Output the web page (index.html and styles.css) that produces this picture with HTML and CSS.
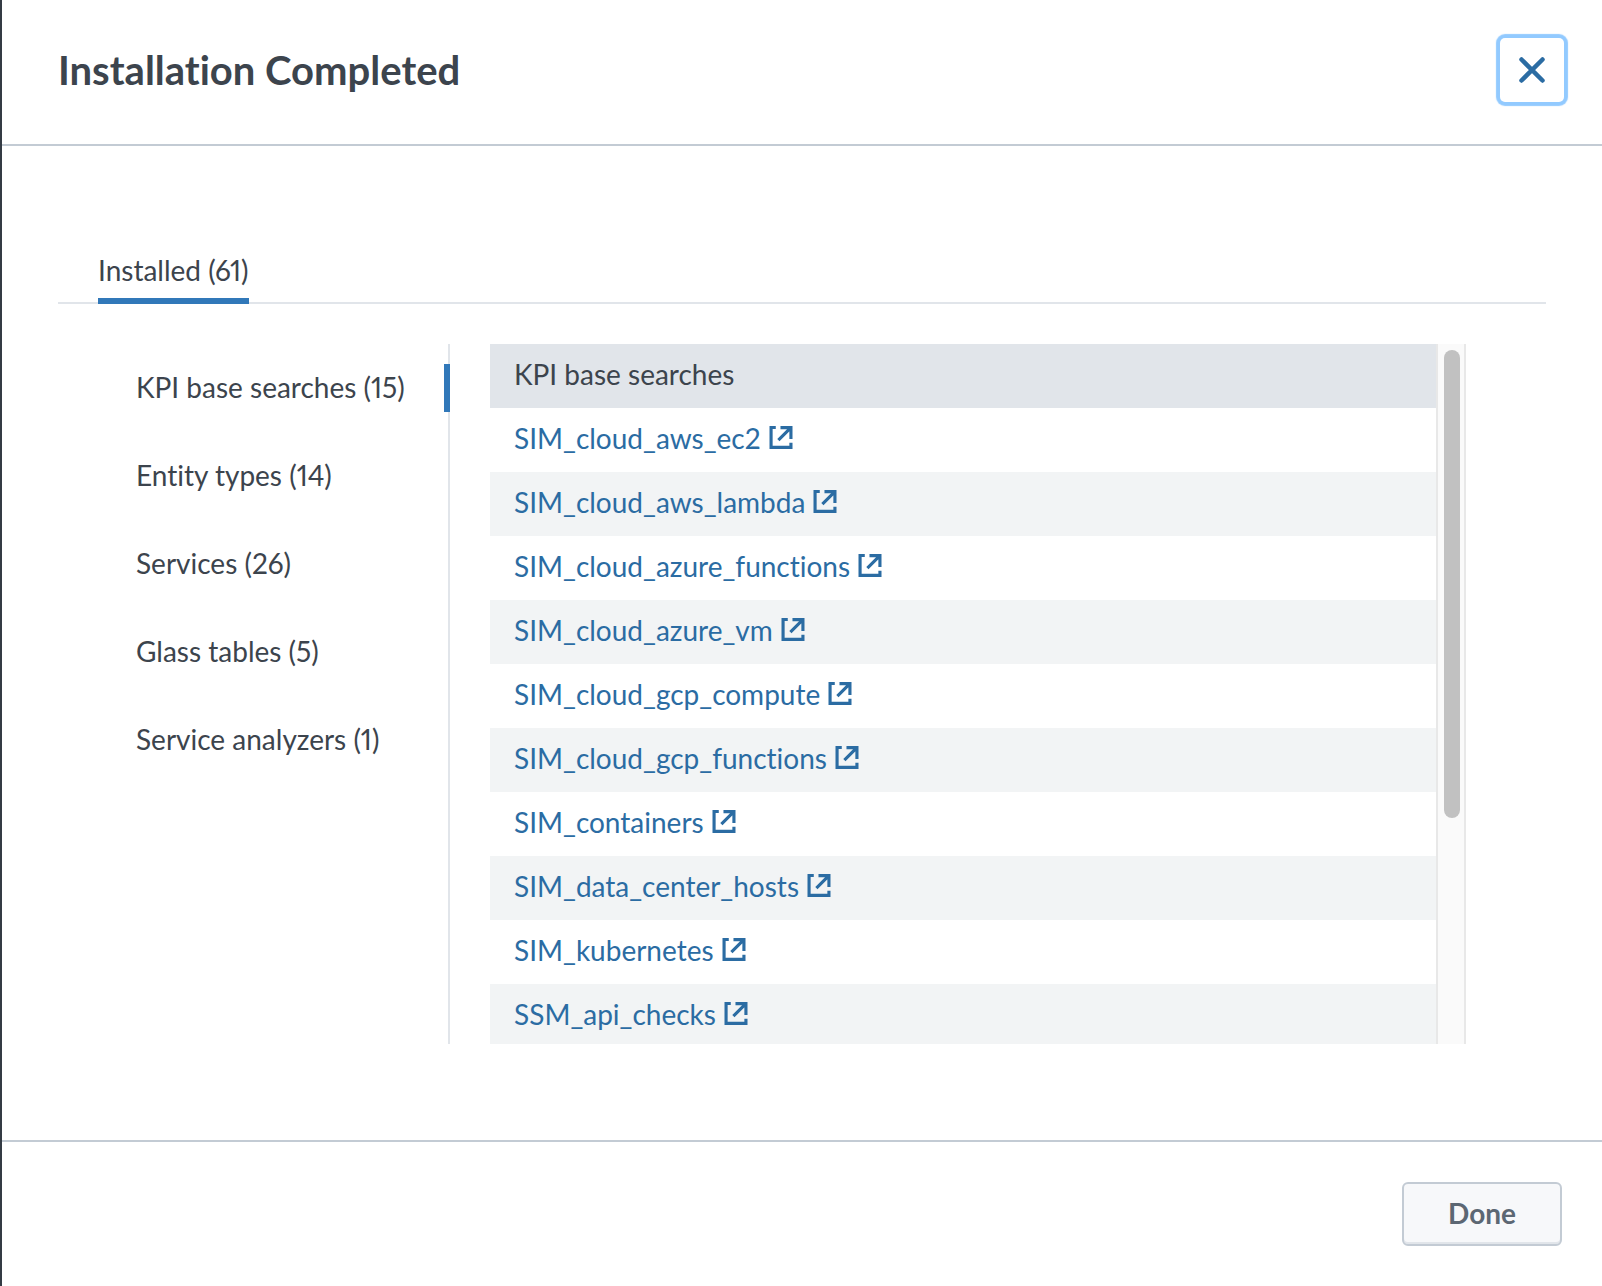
FILE: index.html
```html
<!DOCTYPE html>
<html lang="en">
<head>
  <meta charset="utf-8">
  <meta name="viewport" content="width=device-width, initial-scale=1">
  <title>Installation Completed</title>
  <link rel="stylesheet" href="styles.css">
</head>
<body>
  <svg class="sprite" aria-hidden="true">
    <symbol id="external" viewBox="0 0 22 22">
      <path d="M6 1.250H1.500V20.500H20.500V16" fill="none" stroke="currentColor" stroke-width="3"/>
      <path d="M10.500 1.500H20.500V12.500M19.500 2.500L8.500 13.500" fill="none" stroke="currentColor" stroke-width="3"/>
    </symbol>
  </svg>
  <main class="modal">
    <header class="modal-header">
      <h1 class="modal-title">Installation Completed</h1>
      <button class="close" type="button" aria-label="Close">
        <svg class="close-icon" viewBox="0 0 26 26"><path d="M2.500 2.500L23.500 23.500M23.500 2.500L2.500 23.500" stroke="currentColor" stroke-width="4.500" stroke-linecap="round"/></svg>
      </button>
    </header>
    <section class="modal-body">
      <div class="tabs" role="tablist">
        <button class="tab" type="button" role="tab" aria-selected="true">Installed (61)</button>
      </div>
      <div class="panel">
        <nav class="categories">
          <button class="category active" type="button">KPI base searches (15)</button>
          <button class="category" type="button">Entity types (14)</button>
          <button class="category" type="button">Services (26)</button>
          <button class="category" type="button">Glass tables (5)</button>
          <button class="category" type="button">Service analyzers (1)</button>
        </nav>
        <div class="results">
          <div class="results-view">
            <table class="list">
              <thead><tr><th scope="col">KPI base searches</th></tr></thead>
              <tbody>
                <tr><td><a href="#">SIM_cloud_aws_ec2<svg class="external"><use href="#external"/></svg></a></td></tr>
                <tr><td><a href="#">SIM_cloud_aws_lambda<svg class="external"><use href="#external"/></svg></a></td></tr>
                <tr><td><a href="#">SIM_cloud_azure_functions<svg class="external"><use href="#external"/></svg></a></td></tr>
                <tr><td><a href="#">SIM_cloud_azure_vm<svg class="external"><use href="#external"/></svg></a></td></tr>
                <tr><td><a href="#">SIM_cloud_gcp_compute<svg class="external"><use href="#external"/></svg></a></td></tr>
                <tr><td><a href="#">SIM_cloud_gcp_functions<svg class="external"><use href="#external"/></svg></a></td></tr>
                <tr><td><a href="#">SIM_containers<svg class="external"><use href="#external"/></svg></a></td></tr>
                <tr><td><a href="#">SIM_data_center_hosts<svg class="external"><use href="#external"/></svg></a></td></tr>
                <tr><td><a href="#">SIM_kubernetes<svg class="external"><use href="#external"/></svg></a></td></tr>
                <tr><td><a href="#">SSM_api_checks<svg class="external"><use href="#external"/></svg></a></td></tr>
              </tbody>
            </table>
          </div>
          <div class="scroll-track"><div class="scroll-thumb"></div></div>
        </div>
      </div>
    </section>
    <footer class="modal-footer">
      <button class="done" type="button">Done</button>
    </footer>
  </main>
</body>
</html>
```
FILE: styles.css
```css
* {
  box-sizing: border-box;
}

body {
  margin: 0;
  font-family: Lato, "Open Sans", sans-serif;
  font-size: 28px;
  line-height: 32px;
  font-variant-ligatures: none;
  font-variant-numeric: proportional-nums;
  color: #3c444d;
  background: #fff;
}

button {
  font: inherit;
  font-variant-ligatures: none;
  font-variant-numeric: proportional-nums;
  color: inherit;
  background: none;
  border: 0;
  padding: 0;
}

.sprite {
  display: none;
}

.modal {
  display: flex;
  flex-direction: column;
  height: 100vh;
  border-left: 2px solid #343b44;
}

.modal-header {
  display: flex;
  align-items: center;
  justify-content: space-between;
  padding: 38px 38px 42px 56px;
  border-bottom: 2px solid #c3cbd4;
}

.modal-title {
  margin: 0;
  font-size: 40px;
  line-height: 48px;
  font-weight: 700;
}

.close {
  display: flex;
  align-items: center;
  justify-content: center;
  width: 64px;
  height: 64px;
  border-radius: 5px;
  color: #2b6ca3;
  box-shadow: 0 0 1px 4px #92caff;
}

.close-icon {
  width: 26px;
  height: 26px;
}

.modal-body {
  display: flex;
  flex: 1;
  flex-direction: column;
  gap: 40px;
  min-height: 0;
  padding: 104px 56px 96px;
}

.tabs {
  padding: 0 40px;
  border-bottom: 2px solid #e1e5ea;
}

.tab {
  display: block;
  height: 54px;
  margin-bottom: -2px;
  padding-bottom: 8px;
  border-bottom: 6px solid #3178b9;
}

.panel {
  display: flex;
  flex: 1;
  gap: 40px;
  min-height: 0;
  padding-right: 80px;
}

.categories {
  display: flex;
  flex: none;
  flex-direction: column;
  gap: 40px;
  width: 392px;
  padding: 20px 0 20px 78px;
  border-right: 2px solid #e1e5ea;
}

.category {
  height: 48px;
  margin-right: -2px;
  padding-bottom: 2px;
  text-align: left;
  white-space: nowrap;
}

.category.active {
  border-right: 6px solid #3178b9;
}

.results {
  display: flex;
  flex: 1;
  min-width: 0;
}

.results-view {
  flex: 1;
  overflow: hidden;
}

.list {
  width: 100%;
  border-collapse: collapse;
}

.list th,
.list td {
  height: 64px;
  padding: 14px 24px 18px;
  text-align: left;
  font-weight: 400;
  white-space: nowrap;
}

.list th {
  background: #e1e5ea;
}

.list tbody tr:nth-child(even) {
  background: #f2f4f5;
}

.list a {
  color: #2b6ca3;
  text-decoration: none;
}

.external {
  width: 24px;
  height: 23px;
  margin-left: 8px;
}

.scroll-track {
  width: 30px;
  padding: 6px;
  background: #fafafa;
  border: solid #e8e8e8;
  border-width: 0 2px;
}

.scroll-thumb {
  width: 16px;
  height: 68%;
  border-radius: 8px;
  background: #c1c1c1;
}

.modal-footer {
  display: flex;
  justify-content: flex-end;
  padding: 40px;
  border-top: 2px solid #c3cbd4;
}

.done {
  width: 160px;
  height: 64px;
  padding-bottom: 2px;
  border: 2px solid #c3cbd4;
  border-radius: 6px;
  background: #f7f8fa;
  box-shadow: inset 0 -2px #e1e5ea;
  color: #5c6773;
  font-weight: 700;
}
```
